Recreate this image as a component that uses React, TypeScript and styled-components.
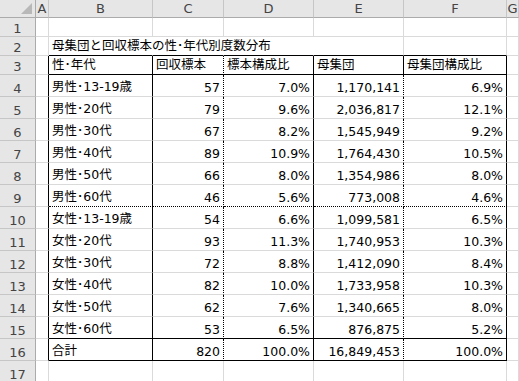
import React from 'react';
import styled, { createGlobalStyle } from 'styled-components';

type Line = 'grid' | 'solid' | 'dot' | 'none';

const GlobalStyle = createGlobalStyle`
  body {
    margin: 0;
    background: #ffffff;
  }
`;

const lineCss = (kind: Line) => {
  if (kind === 'solid') return '1px solid #000000';
  if (kind === 'dot') return '1px dotted #000000';
  if (kind === 'none') return '1px solid transparent';
  return '1px solid #dadada';
};

// シート全体
const Sheet = styled.div`
  display: grid;
  grid-template-columns: 36px 13px 104px 71px 90px 90px 103px 1fr;
  grid-template-rows: 18px 19px 19px 19px repeat(13, 22px) 22px;
  width: 519px;
  height: 381px;
  overflow: hidden;
  background: #ffffff;
  font-family: 'DejaVu Sans', 'Noto Sans CJK JP', sans-serif;
`;

// 左上の角
const Corner = styled.div`
  background: #e6e6e6;
  border-right: 1px solid #ababab;
  border-bottom: 1px solid #ababab;
  display: flex;
  align-items: flex-end;
  justify-content: flex-end;
  padding: 0 3px 3px 0;
`;

// 列見出し
const ColHead = styled.div`
  background: #e6e6e6;
  border-right: 1px solid #c6c6c6;
  border-bottom: 1px solid #ababab;
  color: #444444;
  font-size: 13px;
  display: flex;
  align-items: center;
  justify-content: center;
  overflow: hidden;
`;

// 行番号
const RowHead = styled.div`
  background: #e6e6e6;
  border-right: 1px solid #ababab;
  border-bottom: 1px solid #c6c6c6;
  color: #444444;
  font-size: 13px;
  display: flex;
  align-items: flex-end;
  justify-content: center;
  padding-bottom: 0;
`;

// セル
const Cell = styled.div<{ $r: Line; $b: Line; $align?: 'left' | 'right' }>`
  border-right: ${(p) => lineCss(p.$r)};
  border-bottom: ${(p) => lineCss(p.$b)};
  font-size: 12.5px;
  color: #000000;
  display: flex;
  align-items: flex-end;
  justify-content: ${(p) => (p.$align === 'right' ? 'flex-end' : 'flex-start')};
  padding: 0 3px 1px 3px;
  white-space: nowrap;
  overflow: visible;
  min-width: 0;
  position: relative;
`;

const rows: string[][] = [
  ['男性･13-19歳', '57', '7.0%', '1,170,141', '6.9%'],
  ['男性･20代', '79', '9.6%', '2,036,817', '12.1%'],
  ['男性･30代', '67', '8.2%', '1,545,949', '9.2%'],
  ['男性･40代', '89', '10.9%', '1,764,430', '10.5%'],
  ['男性･50代', '66', '8.0%', '1,354,986', '8.0%'],
  ['男性･60代', '46', '5.6%', '773,008', '4.6%'],
  ['女性･13-19歳', '54', '6.6%', '1,099,581', '6.5%'],
  ['女性･20代', '93', '11.3%', '1,740,953', '10.3%'],
  ['女性･30代', '72', '8.8%', '1,412,090', '8.4%'],
  ['女性･40代', '82', '10.0%', '1,733,958', '10.3%'],
  ['女性･50代', '62', '7.6%', '1,340,665', '8.0%'],
  ['女性･60代', '53', '6.5%', '876,875', '5.2%'],
  ['合計', '820', '100.0%', '16,849,453', '100.0%'],
];

const headers = ['性･年代', '回収標本', '標本構成比', '母集団', '母集団構成比'];
const letters = ['A', 'B', 'C', 'D', 'E', 'F', 'G'];

// 表の縦罫線 (B..F)
const rightLines: Line[] = ['solid', 'dot', 'solid', 'dot', 'solid'];

const App = () => {
  const bottomFor = (rowNo: number): Line => {
    if (rowNo === 3 || rowNo === 15 || rowNo === 16) return 'solid';
    if (rowNo === 9) return 'dot';
    return 'grid';
  };

  const tableRow = (rowNo: number, values: string[], header: boolean) => (
    <React.Fragment key={rowNo}>
      <RowHead>{rowNo}</RowHead>
      <Cell $r="solid" $b="grid" />
      {values.map((v, i) => (
        <Cell
          key={i}
          $r={header && i === 3 ? 'solid' : rightLines[i]}
          $b={bottomFor(rowNo)}
          $align={!header && i > 0 ? 'right' : 'left'}
        >
          {v}
        </Cell>
      ))}
      <Cell $r="grid" $b="grid" />
    </React.Fragment>
  );

  return (
    <>
      <GlobalStyle />
      <Sheet>
        <Corner>
          <svg width="11" height="11" viewBox="0 0 11 11">
            <polygon points="11,0 11,11 0,11" fill="#b8b8b8" />
          </svg>
        </Corner>
        {letters.map((l) => (
          <ColHead key={l}>{l}</ColHead>
        ))}

        <RowHead>1</RowHead>
        {letters.map((l) => (
          <Cell key={l} $r="grid" $b="grid" />
        ))}

        <RowHead>2</RowHead>
        <Cell $r="grid" $b="grid" />
        <Cell $r="none" $b="solid">
          母集団と回収標本の性･年代別度数分布
        </Cell>
        <Cell $r="none" $b="solid" />
        <Cell $r="none" $b="solid" />
        <Cell $r="grid" $b="solid" />
        <Cell $r="grid" $b="solid" />
        <Cell $r="grid" $b="grid" />

        {tableRow(3, headers, true)}
        {rows.map((r, i) => tableRow(i + 4, r, false))}

        <RowHead>17</RowHead>
        {letters.map((l) => (
          <Cell key={l} $r="grid" $b="grid" />
        ))}
      </Sheet>
    </>
  );
};

export default App;
